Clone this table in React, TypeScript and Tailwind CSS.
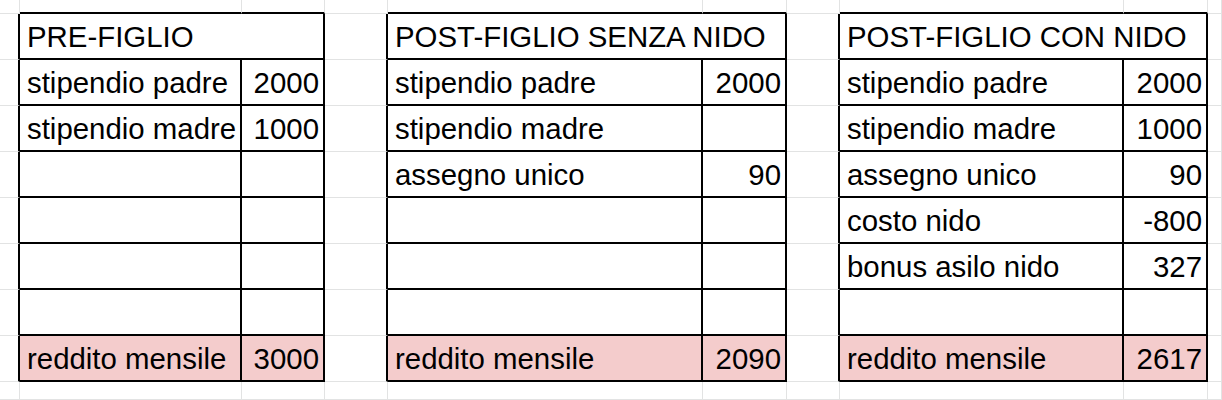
import React from "react";

type Cell = {
  w: string;
  r: "g" | "b";
  b: "g" | "b";
  text?: string;
  align?: "l" | "r";
  pink?: boolean;
};

type Table = {
  title: string;
  wl: string;
  wv: string;
  wm: string;
  rows: [string, string][];
};

const tables: Table[] = [
  {
    title: "PRE-FIGLIO",
    wl: "w-[222px]",
    wv: "w-[83px]",
    wm: "w-[305px]",
    rows: [
      ["stipendio padre", "2000"],
      ["stipendio madre", "1000"],
      ["", ""],
      ["", ""],
      ["", ""],
      ["", ""],
      ["reddito mensile", "3000"],
    ],
  },
  {
    title: "POST-FIGLIO SENZA NIDO",
    wl: "w-[315px]",
    wv: "w-[84px]",
    wm: "w-[399px]",
    rows: [
      ["stipendio padre", "2000"],
      ["stipendio madre", ""],
      ["assegno unico", "90"],
      ["", ""],
      ["", ""],
      ["", ""],
      ["reddito mensile", "2090"],
    ],
  },
  {
    title: "POST-FIGLIO CON NIDO",
    wl: "w-[284px]",
    wv: "w-[84px]",
    wm: "w-[368px]",
    rows: [
      ["stipendio padre", "2000"],
      ["stipendio madre", "1000"],
      ["assegno unico", "90"],
      ["costo nido", "-800"],
      ["bonus asilo nido", "327"],
      ["", ""],
      ["reddito mensile", "2617"],
    ],
  },
];

const gapWidths = ["w-[20px]", "w-[63px]", "w-[53px]"];

function tableCells(t: Table, r: number): Cell[] {
  if (r === 0) {
    return [
      { w: t.wl, r: "g", b: "b" },
      { w: t.wv, r: "g", b: "b" },
    ];
  }
  if (r === 1) {
    return [{ w: t.wm, r: "b", b: "b", text: t.title, align: "l" }];
  }
  if (r >= 2 && r <= 8) {
    const [label, value] = t.rows[r - 2];
    const pink = r === 8;
    return [
      { w: t.wl, r: "b", b: "b", text: label, align: "l", pink },
      { w: t.wv, r: "b", b: "b", text: value, align: "r", pink },
    ];
  }
  return [
    { w: t.wl, r: "g", b: "g" },
    { w: t.wv, r: "g", b: "g" },
  ];
}

function buildRow(r: number): Cell[] {
  const inTable = r >= 1 && r <= 8;
  const cells: Cell[] = [];
  tables.forEach((t, i) => {
    cells.push({ w: gapWidths[i], r: inTable ? "b" : "g", b: "g" });
    cells.push(...tableCells(t, r));
  });
  cells.push({ w: "flex-1", r: "g", b: "g" });
  return cells;
}

function CellView({ c }: { c: Cell }) {
  const right = c.r === "b" ? "border-r-2 border-r-black" : "border-r border-r-[#e2e3e3]";
  const bottom = c.b === "b" ? "border-b-2 border-b-black" : "border-b border-b-[#e2e3e3]";
  const bg = c.pink ? "bg-[#f4cccc]" : "bg-white";
  const align = c.align === "r" ? "justify-end pr-[4px]" : "justify-start pl-[7px]";
  return (
    <div className={`${c.w} shrink-0 box-border h-full flex items-start ${right} ${bottom} ${bg} ${align}`}>
      {c.text ? (
        <span className="whitespace-nowrap leading-[46px] text-[29.4px] text-black">{c.text}</span>
      ) : null}
    </div>
  );
}

const rowHeights = [
  "h-[14px]",
  "h-[46px]",
  "h-[46px]",
  "h-[46px]",
  "h-[46px]",
  "h-[46px]",
  "h-[46px]",
  "h-[46px]",
  "h-[46px]",
  "h-[18px]",
];

export default function App() {
  return (
    <div className="w-[1222px] h-[400px] overflow-hidden bg-white font-['Liberation_Sans',Arial,sans-serif]">
      {rowHeights.map((h, r) => (
        <div key={r} className={`flex ${h}`}>
          {buildRow(r).map((c, i) => (
            <CellView key={i} c={c} />
          ))}
        </div>
      ))}
    </div>
  );
}
